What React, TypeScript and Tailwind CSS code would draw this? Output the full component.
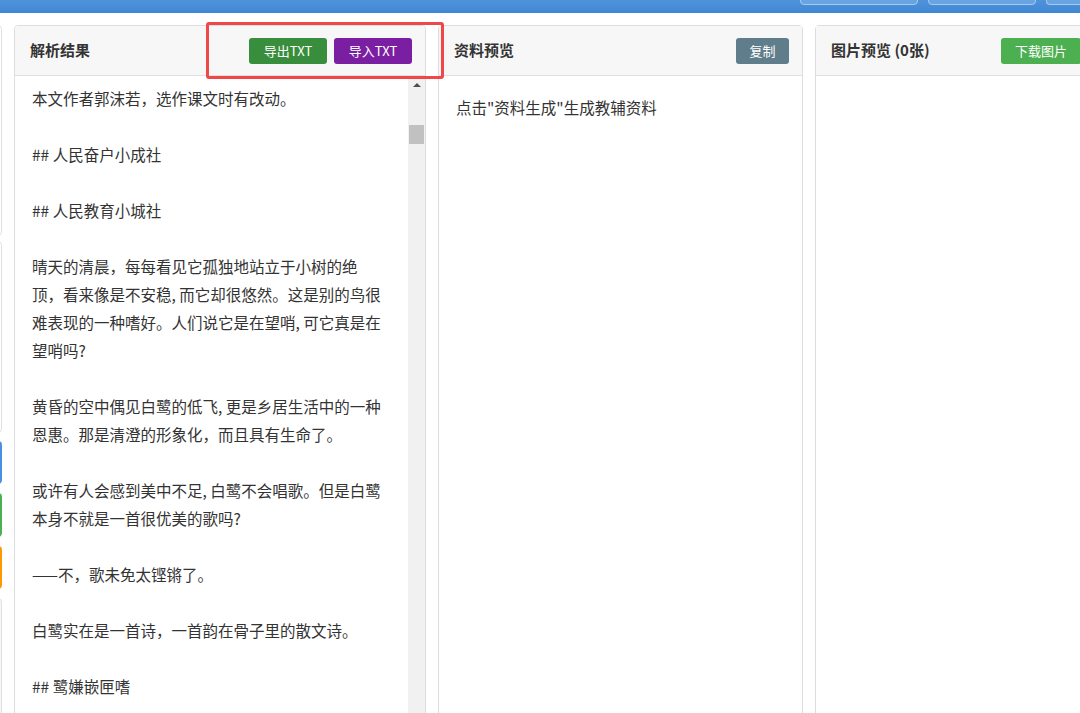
import React from 'react';

const cjk = "font-['Microsoft_YaHei','Noto_Sans_CJK_SC',sans-serif]";

const paragraphs = [
  '本文作者郭沫若，选作课文时有改动。',
  '## 人民奋户小成社',
  '## 人民教育小城社',
  '晴天的清晨，每每看见它孤独地站立于小树的绝顶，看来像是不安稳, 而它却很悠然。这是别的鸟很难表现的一种嗜好。人们说它是在望哨, 可它真是在望哨吗?',
  '黄昏的空中偶见白鹭的低飞, 更是乡居生活中的一种恩惠。那是清澄的形象化，而且具有生命了。',
  '或许有人会感到美中不足, 白鹭不会唱歌。但是白鹭本身不就是一首很优美的歌吗?',
  '——不，歌未免太铿锵了。',
  '白鹭实在是一首诗，一首韵在骨子里的散文诗。',
  '## 鹭嫌嵌匣嗜',
];

function PanelHeader({ title, children }: { title: string; children?: React.ReactNode }) {
  return (
    <div className="h-[50px] shrink-0 flex items-center justify-between pl-[15px] pr-[13px] bg-[#f7f7f7] border-b border-[#e0e0e0]">
      <h3 className="text-[15px] font-bold text-[#333]">{title}</h3>
      <div className="flex items-center gap-[7px]">{children}</div>
    </div>
  );
}

function Btn({ label, color, w }: { label: string; color: string; w: string }) {
  return (
    <button className={`${color} ${w} h-[26px] rounded-[3px] text-white text-[13px] flex items-center justify-center`}>
      {label}
    </button>
  );
}

export default function App() {
  return (
    <div className={`relative h-[713px] w-[1080px] overflow-hidden bg-white ${cjk}`}>
      {/* top bar */}
      <div className="h-[13px] bg-gradient-to-b from-[#4f93da] to-[#3f87d3] flex justify-end gap-[10px] overflow-hidden">
        <div className="w-[118px] h-[6px] -mt-px rounded-b-[4px] bg-[#69a4e2] border border-[#a7c9ef]" />
        <div className="w-[108px] h-[6px] -mt-px rounded-b-[4px] bg-[#69a4e2] border border-[#a7c9ef]" />
        <div className="w-[34px] h-[6px] -mt-px rounded-bl-[4px] bg-[#69a4e2] border border-r-0 border-[#a7c9ef]" />
      </div>

      <div className="flex gap-3 pt-3 -ml-[198px]">
        {/* left column, mostly off-screen */}
        <div className="w-[200px] shrink-0 flex flex-col">
          <div className="h-[211px] rounded-[4px] border border-[#e0e0e0] bg-white" />
          <div className="mt-[5px] h-[192px] rounded-[4px] border border-[#e0e0e0] bg-white" />
          <div className="mt-[8px] flex flex-col gap-[9px]">
            <div className="h-[43px] rounded-[4px] bg-[#4a90e2]" />
            <div className="h-[44px] rounded-[4px] bg-[#4caf50]" />
            <div className="h-[43px] rounded-[4px] bg-[#ff9800]" />
            <div className="h-[120px] rounded-[4px] border border-[#e0e0e0] bg-[#f7f7f7]" />
          </div>
        </div>

        {/* 解析结果 */}
        <section className="w-[412px] h-[720px] shrink-0 flex flex-col rounded-[4px] border border-[#ddd] bg-white overflow-hidden">
          <PanelHeader title="解析结果">
            <Btn label="导出TXT" color="bg-[#388e3c]" w="w-[78px]" />
            <Btn label="导入TXT" color="bg-[#7b1fa2]" w="w-[78px]" />
          </PanelHeader>
          <div className="flex flex-1 min-h-0">
            <div className="flex-1 pl-[17px] pt-[8px] overflow-hidden">
              <div className="w-[352px] text-[15.5px] leading-[28px] text-[#333] flex flex-col gap-[28px]">
                {paragraphs.map((p, i) => (
                  <p key={i}>{p}</p>
                ))}
              </div>
            </div>
            <div className="w-[17px] shrink-0 bg-[#f1f1f1] flex flex-col items-center">
              <div className="h-[17px] flex items-center justify-center">
                <div className="w-0 h-0 border-l-[4px] border-r-[4px] border-b-[4px] border-l-transparent border-r-transparent border-b-[#505050]" />
              </div>
              <div className="mt-[32px] w-[15px] h-[19px] bg-[#c1c1c1]" />
            </div>
          </div>
        </section>

        {/* 资料预览 */}
        <section className="w-[365px] h-[720px] shrink-0 flex flex-col rounded-[4px] border border-[#ddd] bg-white">
          <PanelHeader title="资料预览">
            <Btn label="复制" color="bg-[#607d8b]" w="w-[53px]" />
          </PanelHeader>
          <div className="px-[17px] pt-[20px] text-[15.5px] leading-[22px] text-[#333]">
            点击"资料生成"生成教辅资料
          </div>
        </section>

        {/* 图片预览 */}
        <section className="w-[300px] h-[720px] shrink-0 flex flex-col rounded-[4px] border border-[#ddd] bg-white">
          <div className="h-[50px] shrink-0 flex items-center pl-[15px] bg-[#f7f7f7] border-b border-[#e0e0e0]">
            <h3 className="text-[15px] font-bold text-[#333] w-[170px]">图片预览 (0张)</h3>
            <Btn label="下载图片" color="bg-[#4caf50]" w="w-[80px]" />
          </div>
        </section>
      </div>

      {/* annotation highlight */}
      <div className="absolute left-[206px] top-[22px] w-[238px] h-[57px] rounded-[3px] border-[3px] border-[#f04848] pointer-events-none" />
    </div>
  );
}
